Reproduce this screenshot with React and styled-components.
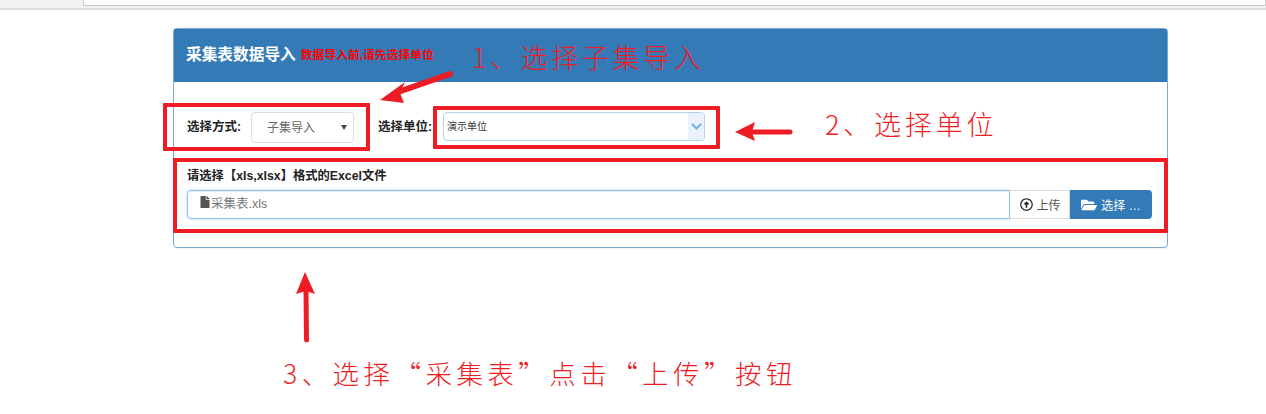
import React from 'react'
import styled, { createGlobalStyle } from 'styled-components'
import { FaFile, FaFolderOpen, FaRegArrowAltCircleUp } from 'react-icons/fa'

const GlobalStyle = createGlobalStyle`
    html, body {
        margin: 0;
        padding: 0;
        background: #fff;
    }
    body {
        font-family: "Liberation Sans", "Noto Sans CJK SC", sans-serif;
        color: #333;
    }
`

const App = () => {
    return (
        <Page>
            <GlobalStyle />
            <BrowserBar>
                <UrlBar />
            </BrowserBar>
            <Main>
                <Panel>
                    <PanelHeader>
                        <PanelTitle>采集表数据导入</PanelTitle>
                        <Warning>数据导入前,请先选择单位</Warning>
                    </PanelHeader>
                    <PanelBody>
                        <SelectRow>
                            <FieldLabel>选择方式:</FieldLabel>
                            <ModeSelect>
                                子集导入
                                <Caret />
                            </ModeSelect>
                            <FieldLabel $left>选择单位:</FieldLabel>
                            <UnitSelect>
                                <UnitText>演示单位</UnitText>
                                <UnitArrow>
                                    <svg width="11" height="7" viewBox="0 0 11 7">
                                        <path d="M1 1l4.5 4.5L10 1" fill="none" stroke="#6fb2e6" strokeWidth="2" />
                                    </svg>
                                </UnitArrow>
                            </UnitSelect>
                        </SelectRow>
                        <FileSection>
                            <FileLabel>请选择【xls,xlsx】格式的Excel文件</FileLabel>
                            <FileGroup>
                                <FileName>
                                    <FaFile size={12} color="#555" />
                                    采集表.xls
                                </FileName>
                                <UploadButton>
                                    <FaRegArrowAltCircleUp size={13} color="#222" />
                                    上传
                                </UploadButton>
                                <BrowseButton>
                                    <FaFolderOpen size={16} />
                                    选择 …
                                </BrowseButton>
                            </FileGroup>
                        </FileSection>
                    </PanelBody>
                </Panel>
            </Main>

            <RedBox $x={163} $y={103} $w={207} $h={48} />
            <RedBox $x={433} $y={106} $w={287} $h={43} />
            <RedBox $x={173} $y={158} $w={995} $h={75} />

            <Note $x={472} $y={37} $size={27} $gap={3.6}>1、选择子集导入</Note>
            <Note $x={825} $y={104} $size={27} $gap={3.8}>2、选择单位</Note>
            <Note $x={283} $y={353} $size={26.5} $gap={4.45}>3、选择“采集表”点击“上传”按钮</Note>

            <Arrows width="1266" height="414" viewBox="0 0 1266 414">
                <path d="M450 74L398 92" stroke="#ee1c25" strokeWidth="6" strokeLinecap="round" />
                <path d="M380 100L405 82L400 93L404 103Z" fill="#ee1c25" />
                <path d="M790 132H752" stroke="#ee1c25" strokeWidth="5" strokeLinecap="round" />
                <path d="M735 132L755 122L752 132L755 141Z" fill="#ee1c25" />
                <path d="M306.5 340L306 290" stroke="#ee1c25" strokeWidth="5" strokeLinecap="round" />
                <path d="M305 272L315 294L306 291L296 294Z" fill="#ee1c25" />
            </Arrows>
        </Page>
    )
}
export default App

const Page = styled.div`
    position: relative;
    width: 1266px;
    height: 414px;
    overflow: hidden;
    background: #fff;
`

const BrowserBar = styled.div`
    height: 8px;
    padding-left: 83px;
    background: #f2f2f2;
    border-bottom: 2px solid #dedede;
`

const UrlBar = styled.div`
    height: 5px;
    background: #fff;
    border: 1px solid #c8c8c8;
    border-top: none;
`

const Main = styled.div`
    padding: 18px 98px 0 173px;
`

const Panel = styled.div`
    height: 220px;
    box-sizing: border-box;
    background: #fff;
    border: 1px solid #7aa8d0;
    border-radius: 4px;
    box-shadow: 0 1px 1px rgba(0, 0, 0, 0.05);
`

const PanelHeader = styled.div`
    display: flex;
    align-items: center;
    height: 53px;
    padding: 0 0 5px 12px;
    box-sizing: border-box;
    background: #337ab7;
`

const PanelTitle = styled.h3`
    margin: 0;
    font-size: 15.7px;
    font-weight: 700;
    color: #fff;
`

const Warning = styled.span`
    margin: 1px 0 0 5px;
    font-size: 11.8px;
    font-weight: 700;
    color: #ff0000;
`

const PanelBody = styled.div`
    padding: 30px 15px 0 13px;
`

const SelectRow = styled.div`
    display: flex;
    align-items: flex-start;
    height: 31px;
`

const FieldLabel = styled.label`
    margin-left: ${props => (props.$left ? '24px' : '0')};
    width: ${props => (props.$left ? '65px' : '65px')};
    line-height: 30px;
    font-size: 12.5px;
    font-weight: 700;
    color: #222;
    white-space: nowrap;
`

const ModeSelect = styled.div`
    position: relative;
    width: 103px;
    height: 31px;
    margin-left: -1px;
    box-sizing: border-box;
    padding-left: 15px;
    line-height: 31px;
    font-size: 12px;
    color: #666;
    background: #fff;
    border: 1px solid #ddd;
    border-radius: 4px;
`

const Caret = styled.span`
    position: absolute;
    right: 6px;
    top: 12px;
    border-left: 3px solid transparent;
    border-right: 3px solid transparent;
    border-top: 5px solid #444;
`

const UnitSelect = styled.div`
    display: flex;
    width: 262px;
    height: 29px;
    box-sizing: border-box;
    background: #fff;
    border: 1px solid #b8d0ec;
    border-radius: 4px;
    overflow: hidden;
`

const UnitText = styled.span`
    flex: 1;
    padding-left: 3px;
    line-height: 27px;
    font-size: 10px;
    color: #333;
`

const UnitArrow = styled.span`
    display: flex;
    align-items: center;
    justify-content: center;
    width: 16px;
    background: #e8f1fc;
`

const FileSection = styled.div`
    margin-top: 24px;
`

const FileLabel = styled.div`
    height: 18px;
    line-height: 18px;
    font-size: 12.3px;
    font-weight: 700;
    color: #222;
`

const FileGroup = styled.div`
    display: flex;
    height: 29px;
    margin-top: 5px;
`

const FileName = styled.div`
    flex: 1;
    display: flex;
    align-items: center;
    padding: 0 0 5px 11px;
    font-size: 12.5px;
    color: #777;
    border: 1px solid #8fc2ea;
    border-radius: 4px 0 0 4px;
    box-shadow: inset 0 1px 1px rgba(0, 0, 0, 0.075), 0 0 3px rgba(102, 175, 233, 0.5);
`

const UploadButton = styled.div`
    display: flex;
    align-items: center;
    justify-content: center;
    gap: 3px;
    width: 60px;
    box-sizing: border-box;
    padding-left: 2px;
    font-size: 12px;
    color: #555;
    background: #fff;
    border: 1px solid #ddd;
    border-left: none;
`

const BrowseButton = styled.div`
    display: flex;
    align-items: center;
    justify-content: center;
    gap: 4px;
    width: 82px;
    font-size: 12px;
    color: #fff;
    background: #337ab7;
    border-radius: 0 4px 4px 0;
`

const RedBox = styled.div`
    position: absolute;
    left: ${props => props.$x}px;
    top: ${props => props.$y}px;
    width: ${props => props.$w}px;
    height: ${props => props.$h}px;
    box-sizing: border-box;
    border: 4px solid #ee1c25;
    border-radius: 1px;
`

const Note = styled.div`
    position: absolute;
    left: ${props => props.$x}px;
    top: ${props => props.$y}px;
    font-family: "Noto Sans CJK SC", sans-serif;
    font-size: ${props => props.$size}px;
    font-weight: 300;
    line-height: 40px;
    letter-spacing: ${props => props.$gap}px;
    color: #ee1c25;
    white-space: nowrap;
`

const Arrows = styled.svg`
    position: absolute;
    left: 0;
    top: 0;
    pointer-events: none;
`
